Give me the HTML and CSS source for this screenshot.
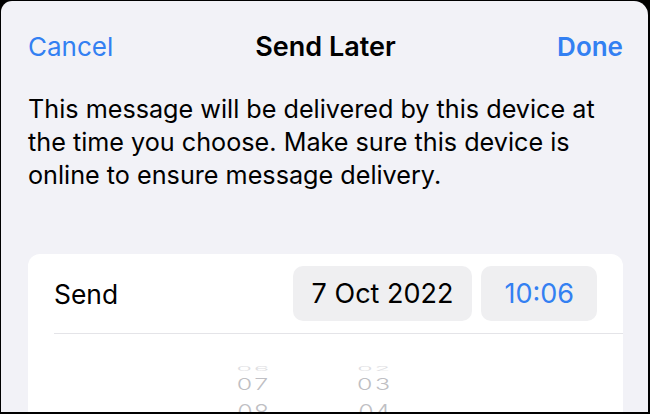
FILE: index.html
```html
<!DOCTYPE html>
<html>
<head>
<meta charset="utf-8">
<link rel="stylesheet" href="styles.css">
</head>
<body>
<div class="sheet">
  <div class="nav">
    <span class="nav-btn cancel">Cancel</span>
    <span class="title">Send Later</span>
    <span class="nav-btn done">Done</span>
  </div>
  <p class="info">This message will be delivered by this device at the time you choose. Make sure this device is online to ensure message delivery.</p>
  <div class="card">
    <div class="row">
      <span class="label">Send</span>
      <div class="pills">
        <span class="pill date">7 Oct 2022</span>
        <span class="pill time">10:06</span>
      </div>
    </div>
    <div class="sep"></div>
    <div class="picker">
      <div class="col">
        <span class="far">06</span>
        <span class="near">07</span>
        <span class="next">08</span>
      </div>
      <div class="col">
        <span class="far">02</span>
        <span class="near">03</span>
        <span class="next">04</span>
      </div>
    </div>
  </div>
</div>
</body>
</html>
```
FILE: styles.css
```css
html, body {
  margin: 0;
  padding: 0;
  background: #000;
  width: 650px;
  height: 414px;
  overflow: hidden;
}
body {
  font-family: Inter, "Noto Sans", sans-serif;
  color: #000;
}
.sheet {
  margin: 1px 2px 2px 1px;
  height: 411px;
  background: #f2f2f7;
  border-radius: 11px 14px 0 0;
  overflow: hidden;
  padding: 31px 25px 0 27px;
  box-sizing: border-box;
}
.nav {
  display: grid;
  grid-template-columns: 1fr auto 1fr;
  align-items: center;
  height: 30px;
  font-size: 26px;
  line-height: 30px;
}
.nav-btn { color: #3380f2; }
.cancel { justify-self: start; }
.done { justify-self: end; font-weight: 600; }
.title { font-weight: 600; font-size: 27px; }
.info {
  margin: 31px 0 0 0;
  font-size: 25.2px;
  line-height: 33px;
}
.card {
  margin-top: 62px;
  background: #fff;
  border-radius: 12px;
  height: 200px;
  overflow: hidden;
}
.row {
  display: flex;
  align-items: center;
  justify-content: space-between;
  padding: 12px 26px 12px 26px;
  height: 55px;
}
.label { font-size: 26.4px; }
.pills {
  display: flex;
  gap: 9px;
}
.pill {
  background: #efeff1;
  border-radius: 10px;
  height: 55px;
  line-height: 55px;
  font-size: 27px;
  padding: 0 19px;
}
.time {
  color: #3380f2;
  padding: 0 23px;
}
.sep {
  height: 1px;
  background: #e4e4e8;
  margin-left: 26px;
}
.picker {
  display: flex;
  justify-content: center;
  gap: 86px;
  padding-right: 22px;
  padding-top: 32px;
}
.col {
  display: flex;
  flex-direction: column;
  align-items: center;
  color: #bfbfc4;
  font-size: 25px;
  font-weight: 300;
}
.col span { display: block; line-height: 22px; }
.far {
  transform: scaleY(0.25);
  height: 6px;
  line-height: 6px !important;
  color: #dedee2;
  letter-spacing: 2px;
}
.near {
  transform: scaleY(0.62);
  height: 16px;
  line-height: 16px !important;
  letter-spacing: 2.5px;
  margin-top: 4px;
}
.next {
  transform: scaleY(0.85);
  margin-top: 9px;
  letter-spacing: 1px;
}
```
